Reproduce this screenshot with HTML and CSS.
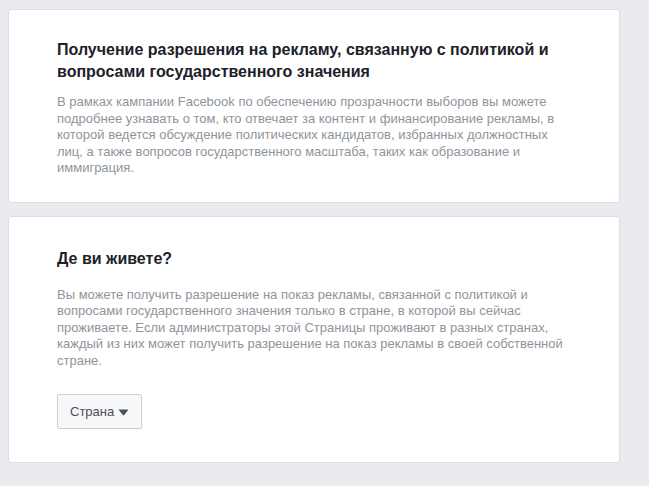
FILE: index.html
```html
<!DOCTYPE html>
<html lang="ru">
<head>
    <meta charset="UTF-8">
    <meta name="viewport" content="width=device-width, initial-scale=1.0">
    <title>Разрешение на рекламу</title>
    <link rel="stylesheet" href="styles.css">
</head>
<body>
    <div class="page">
        <!-- Intro -->
        <div class="card intro-card">
            <h2 class="card-title">Получение разрешения на рекламу, связанную с политикой и вопросами государственного значения</h2>
            <p class="card-text">В рамках кампании Facebook по обеспечению прозрачности выборов вы можете подробнее узнавать о том, кто отвечает за контент и финансирование рекламы, в которой ведется обсуждение политических кандидатов, избранных должностных лиц, а также вопросов государственного масштаба, таких как образование и иммиграция.</p>
        </div>

        <!-- Country -->
        <div class="card country-card">
            <h2 class="card-title">Де ви живете?</h2>
            <p class="card-text">Вы можете получить разрешение на показ рекламы, связанной с политикой и вопросами государственного значения только в стране, в которой вы сейчас проживаете. Если администраторы этой Страницы проживают в разных странах, каждый из них может получить разрешение на показ рекламы в своей собственной стране.</p>
            <button class="country-button">
                Страна
                <svg class="caret" width="11" height="7" viewBox="0 0 11 7">
                    <path d="M0.5 0.5 L10.5 0.5 L6.2 6 Q5.5 6.8 4.8 6 Z" fill="#4b4f56"/>
                </svg>
            </button>
        </div>
    </div>
</body>
</html>
```

FILE: styles.css
```css
/* General Styles */
body {
    margin: 0;
    font-family: "Liberation Sans", Arial, sans-serif;
    background-color: #e9ebee;
    color: #1d2129;
}

.page {
    display: flex;
    flex-direction: column;
    gap: 13px;
    width: 612px;
    padding: 9px 0 0 8px;
}

.card {
    background-color: #fff;
    border: 1px solid #dddfe2;
    border-radius: 3px;
    padding: 29px 48px 25px;
}

.country-card {
    padding: 31px 48px 33px;
}

.card-title {
    margin: 0 0 11px;
    font-size: 16px;
    line-height: 22px;
    font-weight: bold;
    color: #1d2129;
}

.country-card .card-title {
    margin-bottom: 17px;
}

.card-text {
    margin: 0;
    font-size: 13px;
    line-height: 16.5px;
    color: #90949c;
}

.country-button {
    display: flex;
    align-items: center;
    gap: 4px;
    height: 35px;
    margin-top: 25px;
    padding: 0 12px;
    font-family: "Liberation Sans", Arial, sans-serif;
    font-size: 13px;
    color: #4b4f56;
    background-color: #f6f7f9;
    border: 1px solid #ccd0d5;
    border-radius: 2px;
    cursor: pointer;
}

.caret {
    display: block;
    margin-top: 1px;
}
```
